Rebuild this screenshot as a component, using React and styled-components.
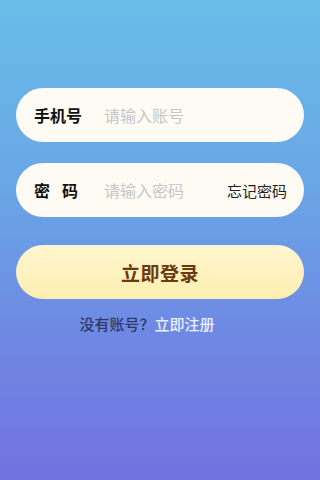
import React from "react";
import styled, { createGlobalStyle } from "styled-components";

const Global = createGlobalStyle`
  html, body { margin: 0; padding: 0; }
  body {
    width: 320px;
    height: 480px;
    overflow: hidden;
    font-family: "Noto Sans CJK SC", "Noto Sans", sans-serif;
  }
`;

const Page = styled.div`
  width: 320px;
  height: 480px;
  box-sizing: border-box;
  background: linear-gradient(180deg, #68bde8 0%, #6aa5e6 40%, #6f88e3 70%, #7272e0 100%);
  padding: 88px 16px 0;
  display: flex;
  flex-direction: column;
`;

const Field = styled.div`
  height: 54px;
  border-radius: 27px;
  background: #fdfbf4;
  display: flex;
  align-items: center;
  padding: 0 17px 0 18px;
  margin-bottom: ${(p) => p.$mb || 0}px;
  box-sizing: border-box;
`;

const Label = styled.span`
  width: 70px;
  flex-shrink: 0;
  font-size: 16px;
  font-weight: 700;
  color: #111;
  letter-spacing: ${(p) => (p.$spread ? "12px" : "0")};
`;

const Placeholder = styled.span`
  flex: 1;
  font-size: 16px;
  color: #c6c6c6;
`;

const Forgot = styled.span`
  font-size: 15px;
  color: #222;
`;

const Button = styled.div`
  height: 54px;
  border-radius: 27px;
  background: linear-gradient(180deg, #fff6d0 0%, #fdeeb0 100%);
  display: flex;
  align-items: center;
  justify-content: center;
  font-size: 19px;
  font-weight: 700;
  color: #6b3a0e;
  letter-spacing: 0.5px;
`;

const Register = styled.div`
  margin-top: 14px;
  padding-right: 26px;
  text-align: center;
  font-size: 15px;
  font-weight: 500;
  color: #2c3a6a;
`;

const Link = styled.span`
  color: #e9f1ff;
`;

export default function App() {
  return (
    <>
      <Global />
      <Page>
        <Field $mb={21}>
          <Label>手机号</Label>
          <Placeholder>请输入账号</Placeholder>
        </Field>
        <Field $mb={28}>
          <Label $spread>密码</Label>
          <Placeholder>请输入密码</Placeholder>
          <Forgot>忘记密码</Forgot>
        </Field>
        <Button>立即登录</Button>
        <Register>
          没有账号？<Link>立即注册</Link>
        </Register>
      </Page>
    </>
  );
}
